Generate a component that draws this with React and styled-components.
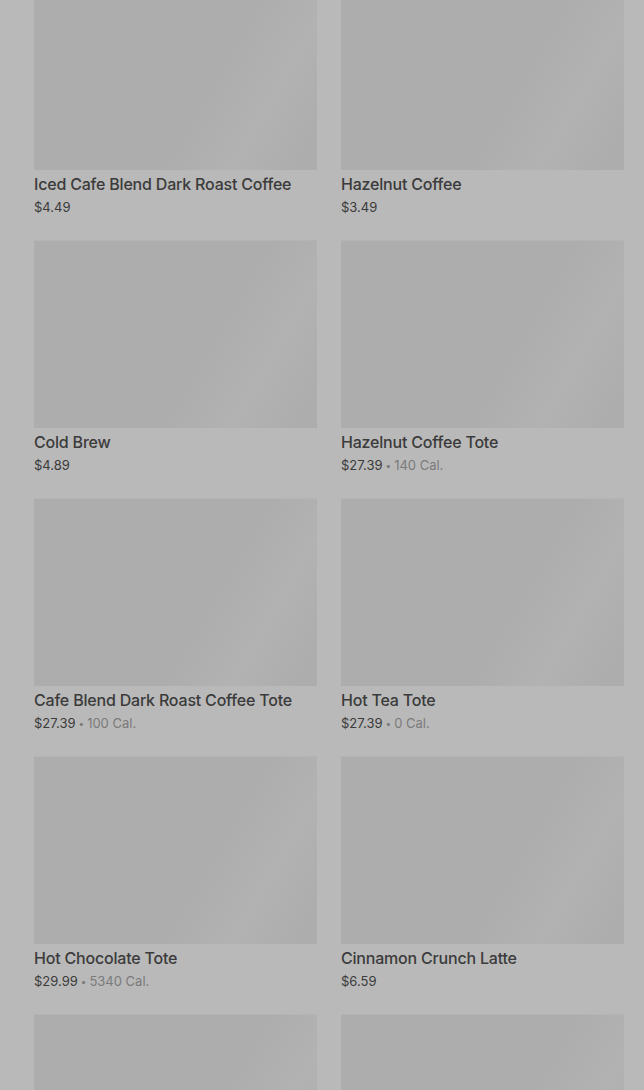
import styled, { createGlobalStyle } from "styled-components";

const GlobalStyle = createGlobalStyle`
  html, body {
    margin: 0;
    padding: 0;
    background: #b9b9b9;
    font-family: "Inter", "Liberation Sans", sans-serif;
    overflow: hidden;
  }
`;

const products = [
  { name: "Iced Cafe Blend Dark Roast Coffee", price: "$4.49" },
  { name: "Hazelnut Coffee", price: "$3.49" },
  { name: "Cold Brew", price: "$4.89" },
  { name: "Hazelnut Coffee Tote", price: "$27.39", cal: "140 Cal." },
  { name: "Cafe Blend Dark Roast Coffee Tote", price: "$27.39", cal: "100 Cal." },
  { name: "Hot Tea Tote", price: "$27.39", cal: "0 Cal." },
  { name: "Hot Chocolate Tote", price: "$29.99", cal: "5340 Cal." },
  { name: "Cinnamon Crunch Latte", price: "$6.59" },
  { name: "", price: "" },
  { name: "", price: "" },
];

const Page = styled.div`
  height: 1090px;
  overflow: hidden;
  background: #b9b9b9;
`;

const Grid = styled.div`
  display: grid;
  grid-template-columns: 283px 283px;
  column-gap: 24px;
  row-gap: 24px;
  padding: 0 20px 0 34px;
  margin-top: -18px;
`;

const Card = styled.div`
  display: flex;
  flex-direction: column;
`;

const Thumb = styled.div`
  height: 188px;
  background: linear-gradient(
    120deg,
    #adadad 0%,
    #adadad 60%,
    #b2b2b2 78%,
    #adadad 95%,
    #adadad 100%
  );
  box-shadow: inset 0 1px 0 #b4b4b4;
`;

const Title = styled.div`
  margin-top: 4px;
  font-size: 16px;
  line-height: 20px;
  font-weight: 500;
  letter-spacing: -0.2px;
  color: #3b3b3b;
  white-space: nowrap;
`;

const Meta = styled.div`
  margin-top: 4px;
  font-size: 13px;
  line-height: 18px;
  color: #3b3b3b;
  display: flex;
  align-items: center;
  gap: 3px;
`;

const Cal = styled.span`
  color: #7b7b7b;
`;

const Dot = styled.span`
  color: #7b7b7b;
  font-size: 10px;
`;

export default function App() {
  return (
    <Page>
      <GlobalStyle />
      <Grid>
        {products.map((p, i) => (
          <Card key={i}>
            <Thumb />
            <Title>{p.name}</Title>
            <Meta>
              <span>{p.price}</span>
              {p.cal && (
                <>
                  <Dot>•</Dot>
                  <Cal>{p.cal}</Cal>
                </>
              )}
            </Meta>
          </Card>
        ))}
      </Grid>
    </Page>
  );
}
